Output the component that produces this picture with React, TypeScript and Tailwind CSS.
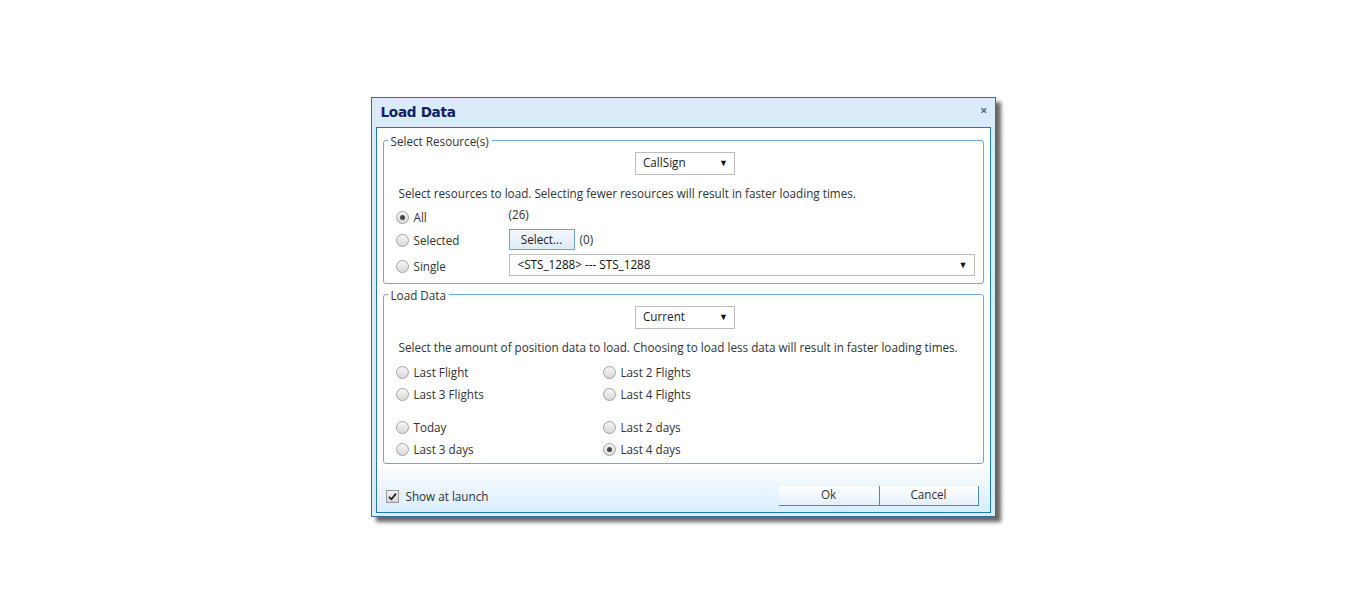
import React from "react";

// Load Data dialog — resource and position-data picker

const FONT = "font-['Open_Sans','Noto_Sans',sans-serif]";

type RadioProps = { label: string; checked?: boolean };

const Radio = ({ label, checked }: RadioProps) => (
  <div className="flex items-center gap-[5px]">
    <span className="w-[13px] h-[13px] rounded-full border border-[#a3a3a3] bg-[linear-gradient(180deg,#f6f6f6_0%,#d8d8d8_100%)] flex items-center justify-center">
      {checked && <span className="w-[5px] h-[5px] rounded-full bg-[#444]" />}
    </span>
    <span>{label}</span>
  </div>
);

const Select = ({ value }: { value: string }) => (
  <div className="w-[100px] h-[23px] border border-[#bdbdbd] bg-white flex items-center justify-between pl-[7px] pr-[6px]">
    <span className="text-[#222]">{value}</span>
    <span className="text-[9px] text-[#111]">▼</span>
  </div>
);

const App = () => {
  return (
    <div className={`w-full h-[613px] bg-white flex items-center justify-center text-[11.7px] text-[#333] ${FONT}`}>
      <div className="w-[625px] h-[420px] border border-[#2f6f9f] bg-[#dcebf9] flex flex-col shadow-[5px_5px_4px_rgba(0,0,0,0.6)]">
        {/* title bar */}
        <div className="h-[29px] flex items-center justify-between pl-[9px] pr-[7px] shrink-0">
          <span className="text-[13.6px] font-bold text-[#0b2468] font-['DejaVu_Sans',sans-serif] tracking-[-0.3px]">Load Data</span>
          <span className="text-[13px] font-bold text-[#3c73a8] leading-none -mt-[3px]">×</span>
        </div>

        {/* content panel */}
        <div className="mx-[4px] mb-[3px] flex-1 border border-[#1b7ab0] bg-[linear-gradient(180deg,#ffffff_0%,#ffffff_87%,#d9ecfb_100%)] flex flex-col px-[6px] pt-[7px]">
          <fieldset className="border border-[#6aa8e0] rounded-[3px] h-[149px] px-[4px] shrink-0">
            <legend className="px-[3px] leading-[12px]">Select Resource(s)</legend>
            <div className="pl-[8px] pr-[4px]">
              <div className="flex justify-center mt-[5px]">
                <Select value="CallSign" />
              </div>
              <div className="h-[18px] mt-[10px] flex items-center pl-[3px]">
                Select resources to load. Selecting fewer resources will result in faster loading times.
              </div>
              <div className="flex items-center h-[22px] mt-[4px]">
                <div className="w-[113px]">
                  <Radio label="All" checked />
                </div>
                <span className="-mt-[6px]">(26)</span>
              </div>
              <div className="flex items-center h-[23px] mt-[1px]">
                <div className="w-[113px]">
                  <Radio label="Selected" />
                </div>
                <button className="h-[21px] w-[66px] border border-[#6ea3d4] bg-[linear-gradient(180deg,#f4f9fe_0%,#dcebf9_100%)] text-[#222] -mt-[3px]">
                  Select...
                </button>
                <span className="ml-[5px] -mt-[3px]">(0)</span>
              </div>
              <div className="flex items-center h-[23px] mt-[1px]">
                <div className="w-[113px] pt-[4px]">
                  <Radio label="Single" />
                </div>
                <div className="flex-1 h-[22px] -mt-[1px] border border-[#bdbdbd] flex items-center justify-between pl-[8px] pr-[6px] text-[#111]">
                  <span>&lt;STS_1288&gt; --- STS_1288</span>
                  <span className="text-[9px]">▼</span>
                </div>
              </div>
            </div>
          </fieldset>

          <fieldset className="border border-[#6aa8e0] rounded-[3px] h-[175px] mt-[5px] px-[4px] shrink-0">
            <legend className="px-[3px] leading-[12px]">Load Data</legend>
            <div className="pl-[8px] pr-[4px]">
              <div className="flex justify-center mt-[5px]">
                <Select value="Current" />
              </div>
              <div className="h-[18px] mt-[10px] flex items-center pl-[3px]">
                Select the amount of position data to load. Choosing to load less data will result in faster loading times.
              </div>
              <div className="grid grid-cols-[207px_1fr] mt-[5px]">
                <div className="h-[22px] flex items-center"><Radio label="Last Flight" /></div>
                <div className="h-[22px] flex items-center"><Radio label="Last 2 Flights" /></div>
                <div className="h-[22px] flex items-center"><Radio label="Last 3 Flights" /></div>
                <div className="h-[22px] flex items-center"><Radio label="Last 4 Flights" /></div>
              </div>
              <div className="grid grid-cols-[207px_1fr] mt-[11px]">
                <div className="h-[22px] flex items-center"><Radio label="Today" /></div>
                <div className="h-[22px] flex items-center"><Radio label="Last 2 days" /></div>
                <div className="h-[22px] flex items-center"><Radio label="Last 3 days" /></div>
                <div className="h-[22px] flex items-center"><Radio label="Last 4 days" checked /></div>
              </div>
            </div>
          </fieldset>

          {/* footer */}
          <div className="flex-1 flex items-end justify-between pl-[3px] pr-[5px] pb-[6px]">
            <div className="flex items-center gap-[7px]">
              <span className="w-[13px] h-[13px] border border-[#9a9a9a] bg-[linear-gradient(180deg,#f2f2f2_0%,#d6d6d6_100%)] flex items-center justify-center">
                <svg width="9" height="9" viewBox="0 0 9 9">
                  <path d="M1 4.8 L3.4 7.2 L8 1.6" fill="none" stroke="#222" strokeWidth="1.8" />
                </svg>
              </span>
              <span>Show at launch</span>
            </div>
            <div className="flex">
              <button className="w-[100px] h-[20px] border-b border-[#4f89bb] bg-[linear-gradient(180deg,#ffffff_0%,#e4f0fb_100%)]">
                Ok
              </button>
              <button className="w-[100px] h-[20px] border-b border-l border-r border-[#4f89bb] bg-[linear-gradient(180deg,#ffffff_0%,#e4f0fb_100%)]">
                Cancel
              </button>
            </div>
          </div>
        </div>
      </div>
    </div>
  );
};

export default App;
